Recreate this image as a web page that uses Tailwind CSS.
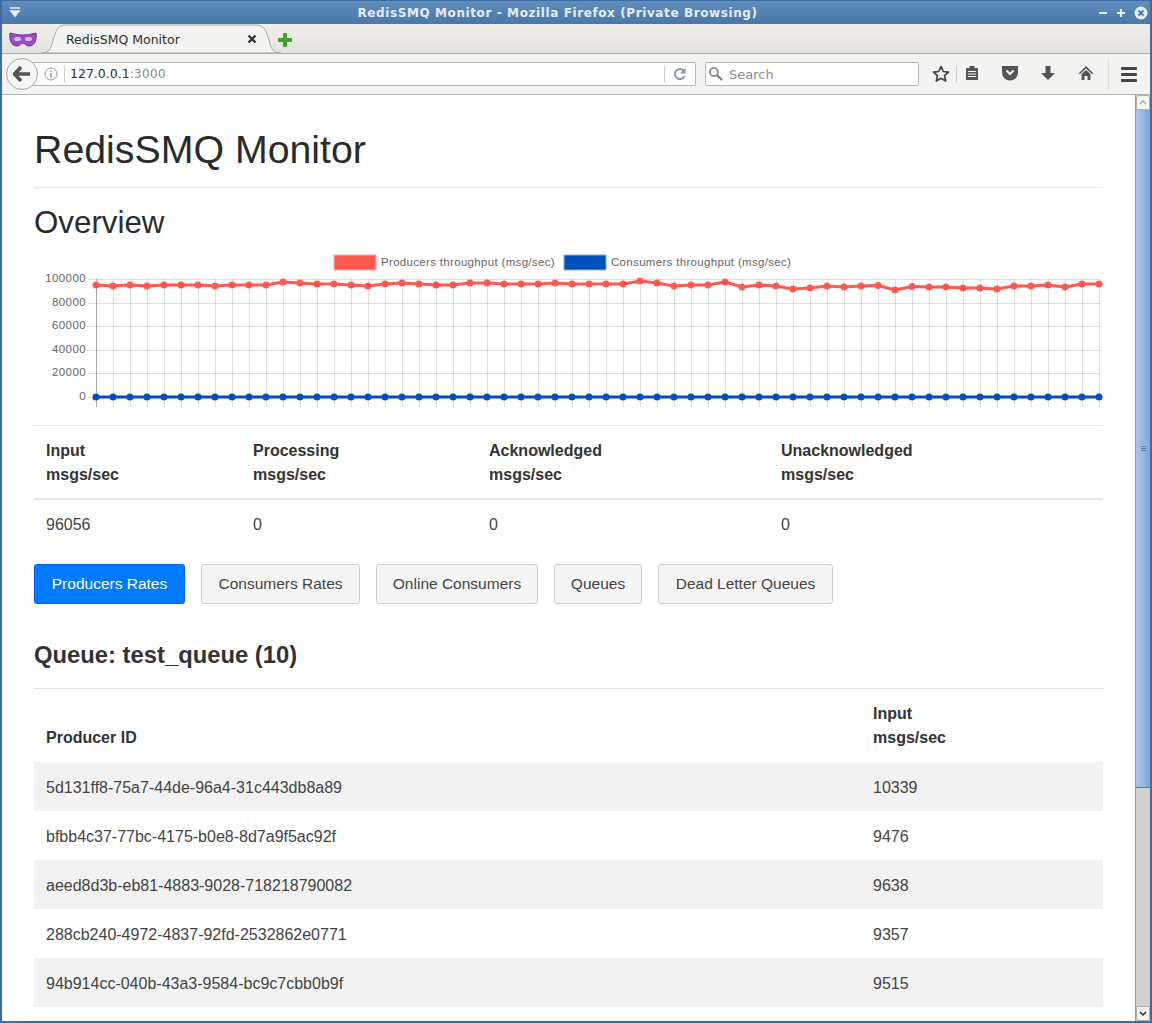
<!DOCTYPE html>
<html lang="en">
<head>
  <meta charset="UTF-8" />
  <title>RedisSMQ Monitor</title>
  <script src="https://cdn.jsdelivr.net/npm/@tailwindcss/browser@4"></script>
</head>
<body class="bg-white">
<div class="w-[1152px] h-[1023px] flex flex-col overflow-hidden border-x-2 border-b-2 border-[#3c6ca3] font-['Liberation_Sans',sans-serif] text-[#333]">

  <!-- title bar -->
  <div class="-mx-[2px] h-[24px] shrink-0 flex items-center justify-between px-[9px] bg-gradient-to-b from-[#5f8dbd] to-[#4a78a9] border-t border-[#3c6ca3] relative">
    <svg width="14" height="12" viewBox="0 0 14 12"><path d="M1 1h10M2 4h8L6 9z" fill="#e8eef5" stroke="#e8eef5" stroke-width="1.6"/></svg>
    <span class="absolute left-0 right-[37px] text-center font-['DejaVu_Sans',sans-serif] font-bold text-[12px] tracking-[0.6px] text-[#e6ebf2]">RedisSMQ Monitor - Mozilla Firefox (Private Browsing)</span>
    <div class="flex items-center gap-[8px] text-white relative -mr-[5px]">
      <svg width="10" height="10" viewBox="0 0 10 10"><path d="M1 5h8" stroke="#e8eef5" stroke-width="2"/></svg>
      <svg width="10" height="10" viewBox="0 0 10 10"><path d="M1 5h8M5 1v8" stroke="#e8eef5" stroke-width="2"/></svg>
      <svg width="14" height="14" viewBox="0 0 14 14"><circle cx="7" cy="7" r="6.5" fill="#e8eef5"/><path d="M4.5 4.5l5 5M9.5 4.5l-5 5" stroke="#4f7dae" stroke-width="2"/></svg>
    </div>
  </div>

  <!-- tab bar -->
  <div class="h-[30px] shrink-0 flex items-end relative bg-gradient-to-b from-[#f0efee] to-[#e3e2e0] border-b border-[#a9a9a7]">
    <svg class="absolute left-[7px] top-[7px]" width="28" height="16" viewBox="0 0 28 16">
      <path d="M1 2c4 1 8 2 13 2s9-1 13-2c1 6-1 13-7 13-3 0-4-3-6-3s-3 3-6 3C2 15 0 8 1 2z" fill="#9a4fc4" stroke="#6f2f9c"/>
      <ellipse cx="8.500" cy="8" rx="3.500" ry="2" fill="#d9bdea"/><ellipse cx="19.500" cy="8" rx="3.500" ry="2" fill="#d9bdea"/>
    </svg>
    <svg class="absolute left-[38px] top-0" width="242" height="30" viewBox="0 0 242 30">
      <path d="M1 29c10 0 10-6 13-16C17 4 19 1 27 1h188c8 0 10 3 13 12 3 10 3 16 13 16z" fill="#f3f3f1" stroke="#aaa9a7"/>
    </svg>
    <span class="absolute left-[64px] top-[7px] font-['DejaVu_Sans',sans-serif] text-[12.500px] text-[#2e2e2e]">RedisSMQ Monitor</span>
    <svg class="absolute left-[245px] top-[10px]" width="10" height="10" viewBox="0 0 10 10"><path d="M1.500 1.500l7 7M8.500 1.500l-7 7" stroke="#333" stroke-width="2.400"/></svg>
    <svg class="absolute left-[276px] top-[9px]" width="14" height="14" viewBox="0 0 14 14"><path d="M7 1v12M1 7h12" stroke="#3da32a" stroke-width="4" stroke-linecap="round"/></svg>
  </div>

  <!-- nav bar -->
  <div class="h-[41px] shrink-0 relative flex items-center bg-[#f3f3f1] border-b border-[#b3b3b1]">
    <div class="absolute left-[30px] top-[8px] w-[664px] h-[24px] bg-white border border-[#b5b5b3] rounded-[2px] flex items-center pl-[37px] font-['DejaVu_Sans',sans-serif] text-[12.500px]">
      <span class="text-[#2e2e2e]">127.0.0.1</span><span class="text-[#8c8c8c]">:3000</span>
    </div>
    <div class="absolute left-[4px] top-[4px] w-[32px] h-[32px] rounded-full bg-[#f6f6f5] border border-[#a9a9a7] flex items-center justify-center">
      <svg width="18" height="16" viewBox="0 0 18 16"><path d="M8 1L1.500 8 8 15M2 8h15" fill="none" stroke="#555" stroke-width="3.600"/></svg>
    </div>
    <svg class="absolute left-[42px] top-[13px]" width="14" height="14" viewBox="0 0 14 14"><circle cx="7" cy="7" r="6" fill="none" stroke="#9b9b9b"/><path d="M7 6v4.500M7 3.500v1.500" stroke="#8a8a8a" stroke-width="1.300"/></svg>
    <div class="absolute left-[62px] top-[12px] w-px h-[16px] bg-[#cfcfcd]"></div>
    <div class="absolute left-[662px] top-[12px] w-px h-[16px] bg-[#cfcfcd]"></div>
    <svg class="absolute left-[671px] top-[13px]" width="14" height="14" viewBox="0 0 14 14"><path d="M11.500 9A5 5 0 1 1 10.500 3.500" fill="none" stroke="#8a96a2" stroke-width="2"/><path d="M12.500 1v5.500H7z" fill="#8a96a2"/></svg>
    <div class="absolute left-[703px] top-[8px] w-[214px] h-[24px] bg-white border border-[#b5b5b3] rounded-[2px] flex items-center pl-[23px] pt-[1px] font-['DejaVu_Sans',sans-serif] text-[13px] text-[#8c8c8c]">Search</div>
    <svg class="absolute left-[706px] top-[12px]" width="16" height="16" viewBox="0 0 16 16"><circle cx="6" cy="6" r="4" fill="none" stroke="#7d7d7d" stroke-width="1.600"/><path d="M9 9l5 5" stroke="#7d7d7d" stroke-width="2.200"/></svg>
    <svg class="absolute left-[930px] top-[11px]" width="18" height="18" viewBox="0 0 18 18"><path d="M9 1.500l2.300 5 5.200.6-3.900 3.600 1.100 5.300L9 13.300 4.300 16l1.100-5.300L1.500 7.100l5.200-.6z" fill="#f3f3f1" stroke="#444" stroke-width="1.700" stroke-linejoin="round"/></svg>
    <div class="absolute left-[954px] top-[11px] w-px h-[18px] bg-[#cfcfcd]"></div>
    <svg class="absolute left-[963px] top-[11px]" width="14" height="16" viewBox="0 0 14 16"><path d="M1 3h3.500V1h5v2H13v12H1z" fill="#555"/><path d="M3 6.500h8M3 9h8M3 11.500h8" stroke="#f3f3f1"/></svg>
    <svg class="absolute left-[1000px] top-[11px]" width="16" height="16" viewBox="0 0 16 16"><path d="M0 1h16v6.500a8 8 0 0 1-16 0z" fill="#555"/><path d="M4.500 5.500L8 9l3.500-3.500" fill="none" stroke="#f3f3f1" stroke-width="2"/></svg>
    <svg class="absolute left-[1038px] top-[11px]" width="16" height="16" viewBox="0 0 16 16"><path d="M5.500 1h5v7H15l-7 7-7-7h4.500z" fill="#555"/></svg>
    <svg class="absolute left-[1076px] top-[11px]" width="16" height="16" viewBox="0 0 16 16"><path d="M8 1L0.500 8.500 2 9l6-5.500L14 9l1.500-.5z" fill="#555"/><path d="M3.500 9L8 5l4.500 4v6H9.500v-4h-3v4h-3z" fill="#555"/></svg>
    <div class="absolute left-[1106px] top-[4px] w-px h-[32px] bg-[#dededc]"></div>
    <div class="absolute left-[1119px] top-[13px] w-[16px] flex flex-col gap-[3px]">
      <div class="h-[3px] bg-[#444] rounded-[1px]"></div><div class="h-[3px] bg-[#444] rounded-[1px]"></div><div class="h-[3px] bg-[#444] rounded-[1px]"></div>
    </div>
  </div>

  <div class="flex-1 flex min-h-0">
    <!-- page -->
    <div class="flex-1 min-w-0 overflow-hidden px-[32px] pt-[31px]">
      <h1 class="text-[39.300px] leading-[46px] text-[#2b2b2b] pb-[15px] border-b border-[#e6e6e6]">RedisSMQ Monitor</h1>
      <h2 class="text-[31.300px] leading-[38px] text-[#2b2b2b] mt-[16px]">Overview</h2>

      <svg id="chart" class="block mt-[8px]" width="1069" height="165" viewBox="34 250 1069 165"></svg>

      <table class="w-[1069px] table-fixed mt-[10px] border-t border-[#e6e6e6] text-[16px] leading-[24px]">
        <colgroup><col class="w-[207px]" /><col class="w-[236px]" /><col class="w-[292px]" /><col /></colgroup>
        <thead>
          <tr class="border-b-2 border-[#e4e4e4] text-left">
            <th class="px-[12px] pt-[13px] pb-[11px] font-bold">Input<br />msgs/sec</th>
            <th class="px-[12px] pt-[13px] pb-[11px] font-bold">Processing<br />msgs/sec</th>
            <th class="px-[12px] pt-[13px] pb-[11px] font-bold">Acknowledged<br />msgs/sec</th>
            <th class="px-[12px] pt-[13px] pb-[11px] font-bold">Unacknowledged<br />msgs/sec</th>
          </tr>
        </thead>
        <tbody>
          <tr class="text-[#444]">
            <td class="px-[12px] pt-[13px] pb-[11px]">96056</td><td class="px-[12px] pt-[13px] pb-[11px]">0</td><td class="px-[12px] pt-[13px] pb-[11px]">0</td><td class="px-[12px] pt-[13px] pb-[11px]">0</td>
          </tr>
        </tbody>
      </table>

      <div class="flex gap-[16px] mt-[16px] text-[15.500px]">
        <button class="h-[40px] w-[151px] rounded-[3px] bg-[#007bff] border border-[#0062ff] text-white">Producers Rates</button>
        <button class="h-[40px] w-[159px] rounded-[3px] bg-[#f5f5f5] border border-[#cccccc] text-[#444]">Consumers Rates</button>
        <button class="h-[40px] w-[162px] rounded-[3px] bg-[#f5f5f5] border border-[#cccccc] text-[#444]">Online Consumers</button>
        <button class="h-[40px] w-[88px] rounded-[3px] bg-[#f5f5f5] border border-[#cccccc] text-[#444]">Queues</button>
        <button class="h-[40px] w-[175px] rounded-[3px] bg-[#f5f5f5] border border-[#cccccc] text-[#444]">Dead Letter Queues</button>
      </div>

      <h3 class="text-[23.800px] leading-[30px] font-bold mt-[36px] pb-[18px] border-b border-[#e6e6e6]">Queue: test_queue (10)</h3>

      <table class="w-[1069px] table-fixed text-[16px] leading-[24px] text-[#444]">
        <colgroup><col class="w-[827px]" /><col /></colgroup>
        <thead>
          <tr class="text-left text-[#333] align-bottom">
            <th class="px-[12px] pt-[13px] pb-[12px] font-bold">Producer ID</th>
            <th class="px-[12px] pt-[13px] pb-[12px] font-bold">Input<br />msgs/sec</th>
          </tr>
        </thead>
        <tbody>
          <tr class="bg-[#f2f2f2] border-t border-[#f2f2f2]"><td class="px-[12px] pt-[13px] pb-[11px]">5d131ff8-75a7-44de-96a4-31c443db8a89</td><td class="px-[12px] pt-[13px] pb-[11px]">10339</td></tr>
          <tr class="border-t border-white"><td class="px-[12px] pt-[13px] pb-[11px]">bfbb4c37-77bc-4175-b0e8-8d7a9f5ac92f</td><td class="px-[12px] pt-[13px] pb-[11px]">9476</td></tr>
          <tr class="bg-[#f2f2f2] border-t border-[#f2f2f2]"><td class="px-[12px] pt-[13px] pb-[11px]">aeed8d3b-eb81-4883-9028-718218790082</td><td class="px-[12px] pt-[13px] pb-[11px]">9638</td></tr>
          <tr class="border-t border-white"><td class="px-[12px] pt-[13px] pb-[11px]">288cb240-4972-4837-92fd-2532862e0771</td><td class="px-[12px] pt-[13px] pb-[11px]">9357</td></tr>
          <tr class="bg-[#f2f2f2] border-t border-[#f2f2f2]"><td class="px-[12px] pt-[13px] pb-[11px]">94b914cc-040b-43a3-9584-bc9c7cbb0b9f</td><td class="px-[12px] pt-[13px] pb-[11px]">9515</td></tr>
        </tbody>
      </table>
    </div>

    <!-- scrollbar -->
    <div class="w-[15px] shrink-0 flex flex-col bg-[#d3d1cf] border-l border-[#9a9a9a]">
      <div class="h-[15px] shrink-0 bg-[#f4f4f3] border border-[#b0b0b0] rounded-t-[3px] flex items-center justify-center">
        <svg width="8" height="5" viewBox="0 0 8 5"><path d="M1 4l3-3 3 3" fill="none" stroke="#aaa" stroke-width="1.400"/></svg>
      </div>
      <div class="h-[678px] shrink-0 bg-gradient-to-r from-[#a9c5e8] to-[#7fa6d8] border-b border-[#4f7dae] flex items-center justify-center">
        <div class="w-[5px] flex flex-col gap-[1px]"><div class="h-px bg-[#4f7dae]"></div><div class="h-px bg-[#4f7dae]"></div><div class="h-px bg-[#4f7dae]"></div></div>
      </div>
      <div class="flex-1"></div>
      <div class="h-[15px] shrink-0 bg-[#f4f4f3] border border-[#b0b0b0] rounded-b-[3px] flex items-center justify-center">
        <svg width="8" height="5" viewBox="0 0 8 5"><path d="M1 1l3 3 3-3" fill="none" stroke="#222" stroke-width="1.400"/></svg>
      </div>
    </div>
  </div>
</div>

<script>
  // throughput chart, y values are pixel rows of the page
  const red = [285,286,285,286,285,285,285,286,285,285,285,282,283,284,284,285,286,284,283,284,
    285,285,283,283,284,284,284,283,284,284,284,284,281,283,286,285,285,282,287,285,
    286,289,288,286,287,286,285.5,290,286.5,287,287,288,288,289,286,286,285,287,284,284];
  const xAt = i => 96 + i * 17;
  const yGrid = [279, 303, 326, 350, 373, 397];
  const yLabels = ["100000", "80000", "60000", "40000", "20000", "0"];
  let s = "";
  red.forEach((_, i) => {
    s += `<line x1="${xAt(i) + .5}" x2="${xAt(i) + .5}" y1="279" y2="407" stroke="${i ? "rgba(0,0,0,.13)" : "#a8a8a8"}"/>`;
  });
  yGrid.forEach((y, i) => {
    s += `<line x1="88" x2="1100" y1="${y + .5}" y2="${y + .5}" stroke="rgba(0,0,0,.13)"/>`;
    s += `<text x="86" y="${y + 3}" text-anchor="end" font-size="11.500" letter-spacing=".4" fill="#666">${yLabels[i]}</text>`;
  });
  s += `<rect x="334" y="255" width="42" height="15" fill="#ff5850" stroke="#ffb0ac"/>`;
  s += `<text x="381" y="266" font-size="11.500" letter-spacing=".32" fill="#666">Producers throughput (msg/sec)</text>`;
  s += `<rect x="564" y="255" width="42" height="15" fill="#0050bb" stroke="#8fb0e0"/>`;
  s += `<text x="611" y="266" font-size="11.500" letter-spacing=".32" fill="#666">Consumers throughput (msg/sec)</text>`;
  const drawLine = (ys, colour) => {
    s += `<polyline points="${ys.map((y, i) => xAt(i) + "," + y).join(" ")}" fill="none" stroke="${colour}" stroke-width="3"/>`;
    ys.forEach((y, i) => { s += `<circle cx="${xAt(i)}" cy="${y}" r="3.500" fill="${colour}"/>`; });
  };
  drawLine(red, "#ff5850");
  drawLine(red.map(() => 397), "#0050bb");
  document.getElementById("chart").innerHTML = s;
</script>
</body>
</html>
